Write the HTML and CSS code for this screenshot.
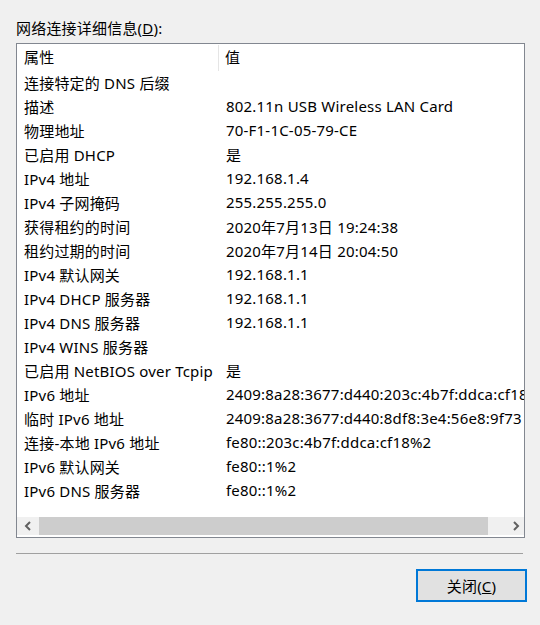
FILE: index.html
```html
<!DOCTYPE html>
<html lang="zh-CN">
<head>
<meta charset="utf-8">
<title>网络连接详细信息</title>
<link rel="stylesheet" href="styles.css">
</head>
<body>
<div class="dialog">
  <div class="label">网络连接详细信息(<u>D</u>):</div>
  <div class="listbox">
    <div class="table">
      <div class="row header">
        <div class="cell name">属性</div>
        <div class="cell value">值</div>
      </div>
      <div class="row"><div class="cell name">连接特定的 DNS 后缀</div><div class="cell value"></div></div>
      <div class="row"><div class="cell name">描述</div><div class="cell value">802.11n USB Wireless LAN Card</div></div>
      <div class="row"><div class="cell name">物理地址</div><div class="cell value">70-F1-1C-05-79-CE</div></div>
      <div class="row"><div class="cell name">已启用 DHCP</div><div class="cell value">是</div></div>
      <div class="row"><div class="cell name">IPv4 地址</div><div class="cell value">192.168.1.4</div></div>
      <div class="row"><div class="cell name">IPv4 子网掩码</div><div class="cell value">255.255.255.0</div></div>
      <div class="row"><div class="cell name">获得租约的时间</div><div class="cell value">2020年7月13日 19:24:38</div></div>
      <div class="row"><div class="cell name">租约过期的时间</div><div class="cell value">2020年7月14日 20:04:50</div></div>
      <div class="row"><div class="cell name">IPv4 默认网关</div><div class="cell value">192.168.1.1</div></div>
      <div class="row"><div class="cell name">IPv4 DHCP 服务器</div><div class="cell value">192.168.1.1</div></div>
      <div class="row"><div class="cell name">IPv4 DNS 服务器</div><div class="cell value">192.168.1.1</div></div>
      <div class="row"><div class="cell name">IPv4 WINS 服务器</div><div class="cell value"></div></div>
      <div class="row"><div class="cell name">已启用 NetBIOS over Tcpip</div><div class="cell value">是</div></div>
      <div class="row"><div class="cell name">IPv6 地址</div><div class="cell value">2409:8a28:3677:d440:203c:4b7f:ddca:cf18</div></div>
      <div class="row"><div class="cell name">临时 IPv6 地址</div><div class="cell value">2409:8a28:3677:d440:8df8:3e4:56e8:9f73</div></div>
      <div class="row"><div class="cell name">连接-本地 IPv6 地址</div><div class="cell value">fe80::203c:4b7f:ddca:cf18%2</div></div>
      <div class="row"><div class="cell name">IPv6 默认网关</div><div class="cell value">fe80::1%2</div></div>
      <div class="row"><div class="cell name">IPv6 DNS 服务器</div><div class="cell value">fe80::1%2</div></div>
    </div>
    <div class="hscroll">
      <div class="sb-btn sb-left"><svg width="9" height="10" viewBox="0 0 9 10"><path d="M6 1 L2 5 L6 9" fill="none" stroke="#606060" stroke-width="2"/></svg></div>
      <div class="sb-track"><div class="sb-thumb"></div></div>
      <div class="sb-btn sb-right"><svg width="9" height="10" viewBox="0 0 9 10"><path d="M3 1 L7 5 L3 9" fill="none" stroke="#606060" stroke-width="2"/></svg></div>
    </div>
  </div>
  <div class="separator"></div>
  <div class="actions">
    <button class="btn">关闭(<u>C</u>)</button>
  </div>
</div>
</body>
</html>
```
FILE: styles.css
```css
html, body {
  margin: 0;
  padding: 0;
  background: #f0f0f0;
}
body {
  font-family: "Noto Sans", "Noto Sans CJK SC", sans-serif;
  font-size: 15px;
  letter-spacing: 0.2px;
  color: #000;
}
.dialog {
  padding: 19px 16px 0 16px;
  width: 509px;
}
.label {
  line-height: 18px;
  height: 20px;
  margin-bottom: 4px;
  white-space: nowrap;
}
.listbox {
  box-sizing: border-box;
  width: 509px;
  height: 495px;
  border: 1px solid #828790;
  background: #fff;
  display: flex;
  flex-direction: column;
  padding-bottom: 2px;
}
.table {
  flex: 1;
  overflow: hidden;
}
.row {
  box-sizing: border-box;
  display: flex;
  height: 24px;
  padding-bottom: 2px;
  align-items: center;
  white-space: nowrap;
}
.row.header {
  height: 27px;
  padding-bottom: 0;
}
.cell.name {
  flex: 0 0 202px;
  box-sizing: border-box;
  padding-left: 7px;
  overflow: hidden;
}
.cell.value {
  flex: 0 0 auto;
  padding-left: 7px;
}
.header .cell.name {
  border-right: 1px solid #e5e5e5;
  height: 26px;
  line-height: 24px;
  margin-top: 1px;
}
.header .cell.value {
  padding-left: 6px;
  line-height: 24px;
  height: 26px;
  margin-top: 1px;
}
.hscroll {
  display: flex;
  height: 18px;
  background: #f0f0f0;
}
.sb-btn {
  display: flex;
  align-items: center;
  justify-content: center;
  flex: 0 0 17px;
}
.sb-left { flex-basis: 22px; }
.sb-track {
  flex: 1;
  display: flex;
}
.sb-thumb {
  width: 449px;
  background: #cdcdcd;
}
.separator {
  margin-top: 15px;
  width: 507px;
  height: 1px;
  background: #a0a0a0;
}
.actions {
  display: flex;
  justify-content: flex-end;
  margin-top: 15px;
  margin-right: -2px;
}
.btn {
  box-sizing: border-box;
  width: 111px;
  height: 33px;
  border: 2px solid #0078d7;
  background: #e1e1e1;
  font-family: inherit;
  font-size: 15px;
  letter-spacing: 0.2px;
  color: #000;
  padding: 0 0 1px 0;
  margin: 0;
}
```
